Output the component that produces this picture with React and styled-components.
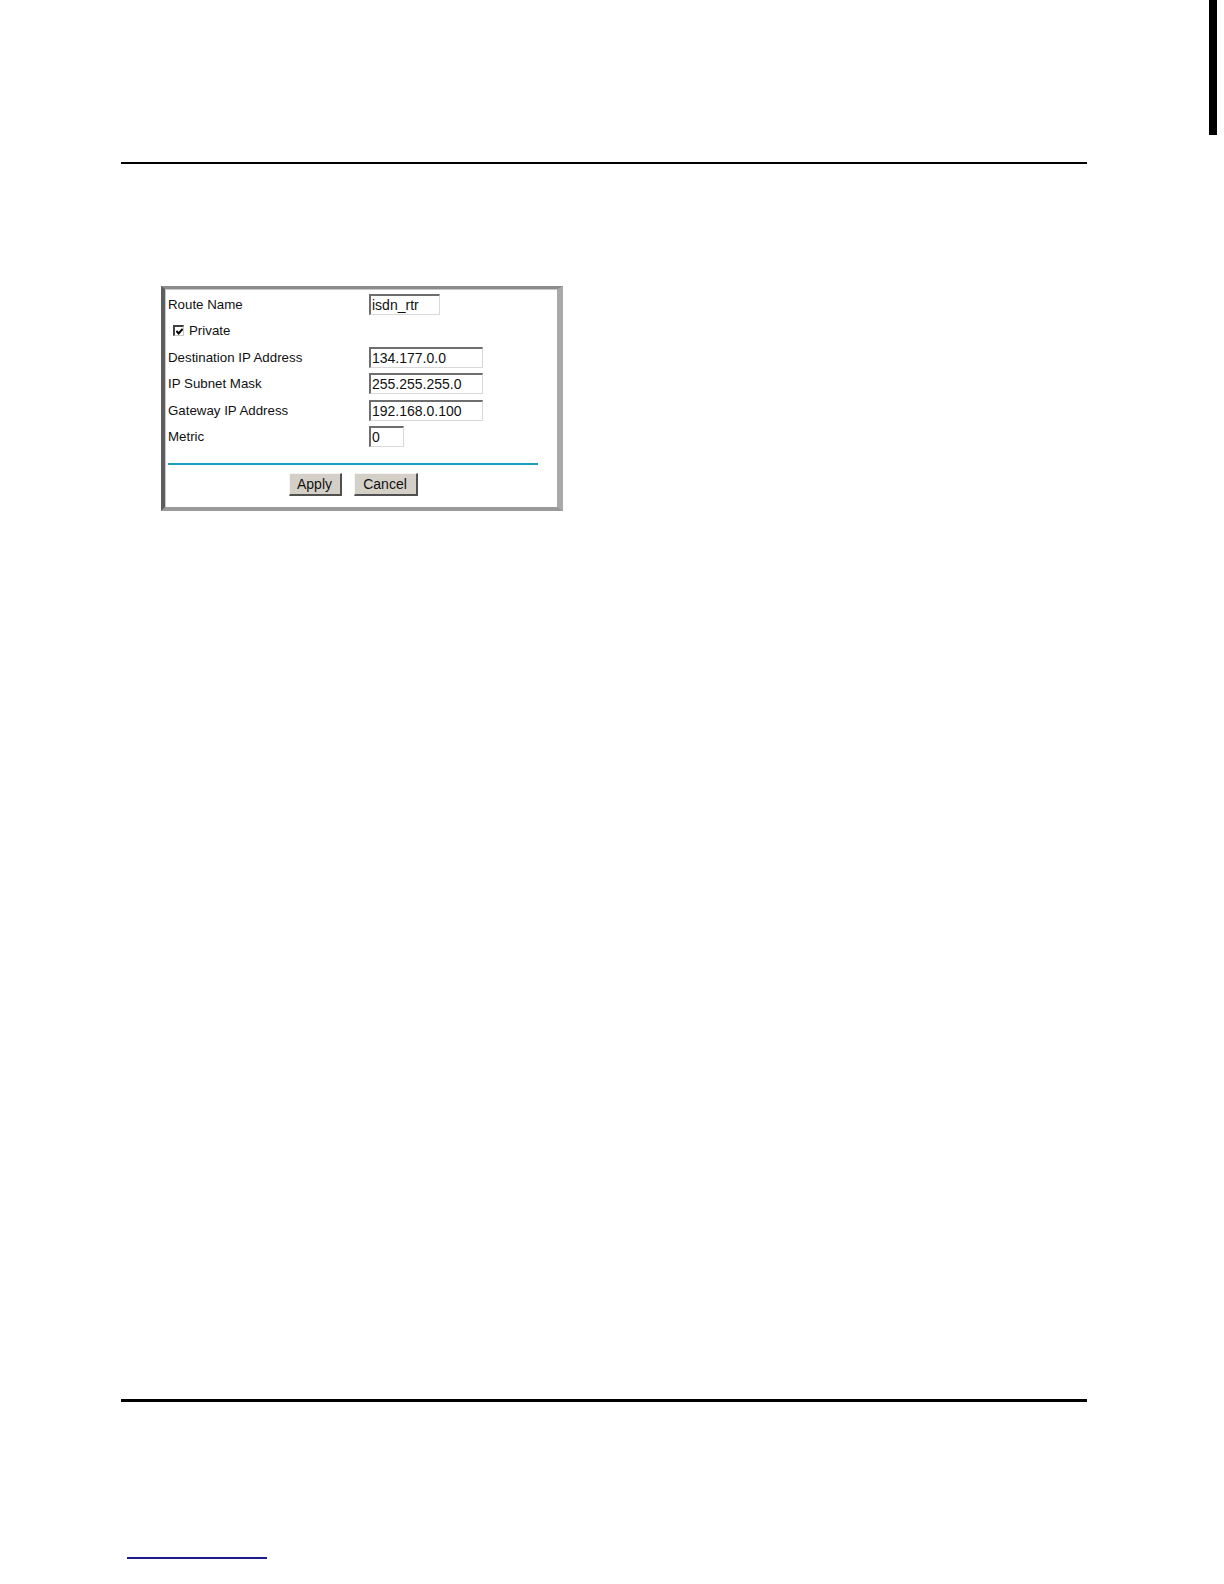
import React from 'react'
import styled, { createGlobalStyle } from 'styled-components'

const Global = createGlobalStyle`
  html, body {
    margin: 0;
    padding: 0;
    background: #ffffff;
  }
`

const Page = styled.div`
  width: 1224px;
  height: 1584px;
  background: #fff;
  font-family: "Liberation Sans", Arial, sans-serif;
  overflow: hidden;
`

const Top = styled.div`
  height: 162px;
  display: flex;
  justify-content: flex-end;
  padding-right: 7px;
`

const Tab = styled.div`
  width: 8px;
  height: 135px;
  background: #000;
`

const Rule = styled.div`
  margin-left: 121px;
  width: 966px;
  height: ${(p) => p.thick}px;
  background: #000;
`

const Panel = styled.div`
  margin: 122px 0 0 161px;
  width: 392px;
  height: 218px;
  background: #fff;
  border-style: solid;
  border-width: 3px 6px 4px 4px;
  border-color: #8c8c8c #a8a8a8 #9a9a9a #5e5e5e;
  box-shadow: inset 1px 1px 0 #c8c8c8;
`

const Body = styled.div`
  padding: 2px 0 0 3px;
`

const Row = styled.div`
  height: 26.5px;
  display: grid;
  grid-template-columns: 201px 1fr;
  align-items: center;
  font-size: 13.3px;
  color: #111;
`

const Label = styled.span`
  white-space: nowrap;
`

const Field = styled.div`
  width: ${(p) => p.w}px;
  height: 21px;
  box-sizing: border-box;
  border-style: solid;
  border-width: 2px 1px 1px 2px;
  border-color: #6e6e6e #d8d8d8 #d8d8d8 #6e6e6e;
  background: #fff;
  font-size: 14px;
  line-height: 18px;
  padding-left: 1px;
  color: #111;
  white-space: nowrap;
  overflow: hidden;
`

const CheckLine = styled.label`
  display: flex;
  align-items: center;
  gap: 5px;
  padding-left: 5px;
  font-size: 13.3px;
  color: #111;
`

const Box = styled.span`
  width: 11px;
  height: 11px;
  box-sizing: border-box;
  border-style: solid;
  border-width: 2px 1px 1px 2px;
  border-color: #404040 #c8c8c8 #c8c8c8 #404040;
  display: flex;
  align-items: center;
  justify-content: center;
  background: #fff;
`

const Divider = styled.div`
  margin-top: 13px;
  width: 370px;
  height: 2px;
  background: #1b9cc0;
`

const Buttons = styled.div`
  width: 370px;
  margin-top: 8px;
  display: flex;
  justify-content: center;
  gap: 12px;
`

const Button = styled.div`
  width: ${(p) => p.w}px;
  height: 23px;
  box-sizing: border-box;
  background: #d4d0c8;
  border-style: solid;
  border-width: 1px 2px 2px 1px;
  border-color: #f4f4f4 #505050 #505050 #f4f4f4;
  display: flex;
  align-items: center;
  justify-content: center;
  font-size: 14px;
  color: #111;
`

const Link = styled.div`
  margin: 155px 0 0 127px;
  width: 140px;
  height: 2px;
  background: #1c1c8a;
`

const rows = [
  { label: 'Destination IP Address', value: '134.177.0.0', w: 114 },
  { label: 'IP Subnet Mask', value: '255.255.255.0', w: 114 },
  { label: 'Gateway IP Address', value: '192.168.0.100', w: 114 },
  { label: 'Metric', value: '0', w: 35 },
]

export default function App() {
  return (
    <Page>
      <Global />
      <Top>
        <Tab />
      </Top>
      <Rule thick={2} />
      <Panel>
        <Body>
          <Row>
            <Label>Route Name</Label>
            <Field w={71}>isdn_rtr</Field>
          </Row>
          <Row>
            <CheckLine>
              <Box>
                <svg width="7" height="7" viewBox="0 0 7 7">
                  <path d="M0.4 3 L2.6 5.4 L6.6 1" fill="none" stroke="#000" strokeWidth="2" />
                </svg>
              </Box>
              Private
            </CheckLine>
          </Row>
          {rows.map((r) => (
            <Row key={r.label}>
              <Label>{r.label}</Label>
              <Field w={r.w}>{r.value}</Field>
            </Row>
          ))}
          <Divider />
          <Buttons>
            <Button w={53}>Apply</Button>
            <Button w={64}>Cancel</Button>
          </Buttons>
        </Body>
      </Panel>
      <Rule thick={3} style={{ marginTop: 888 }} />
      <Link />
    </Page>
  )
}
